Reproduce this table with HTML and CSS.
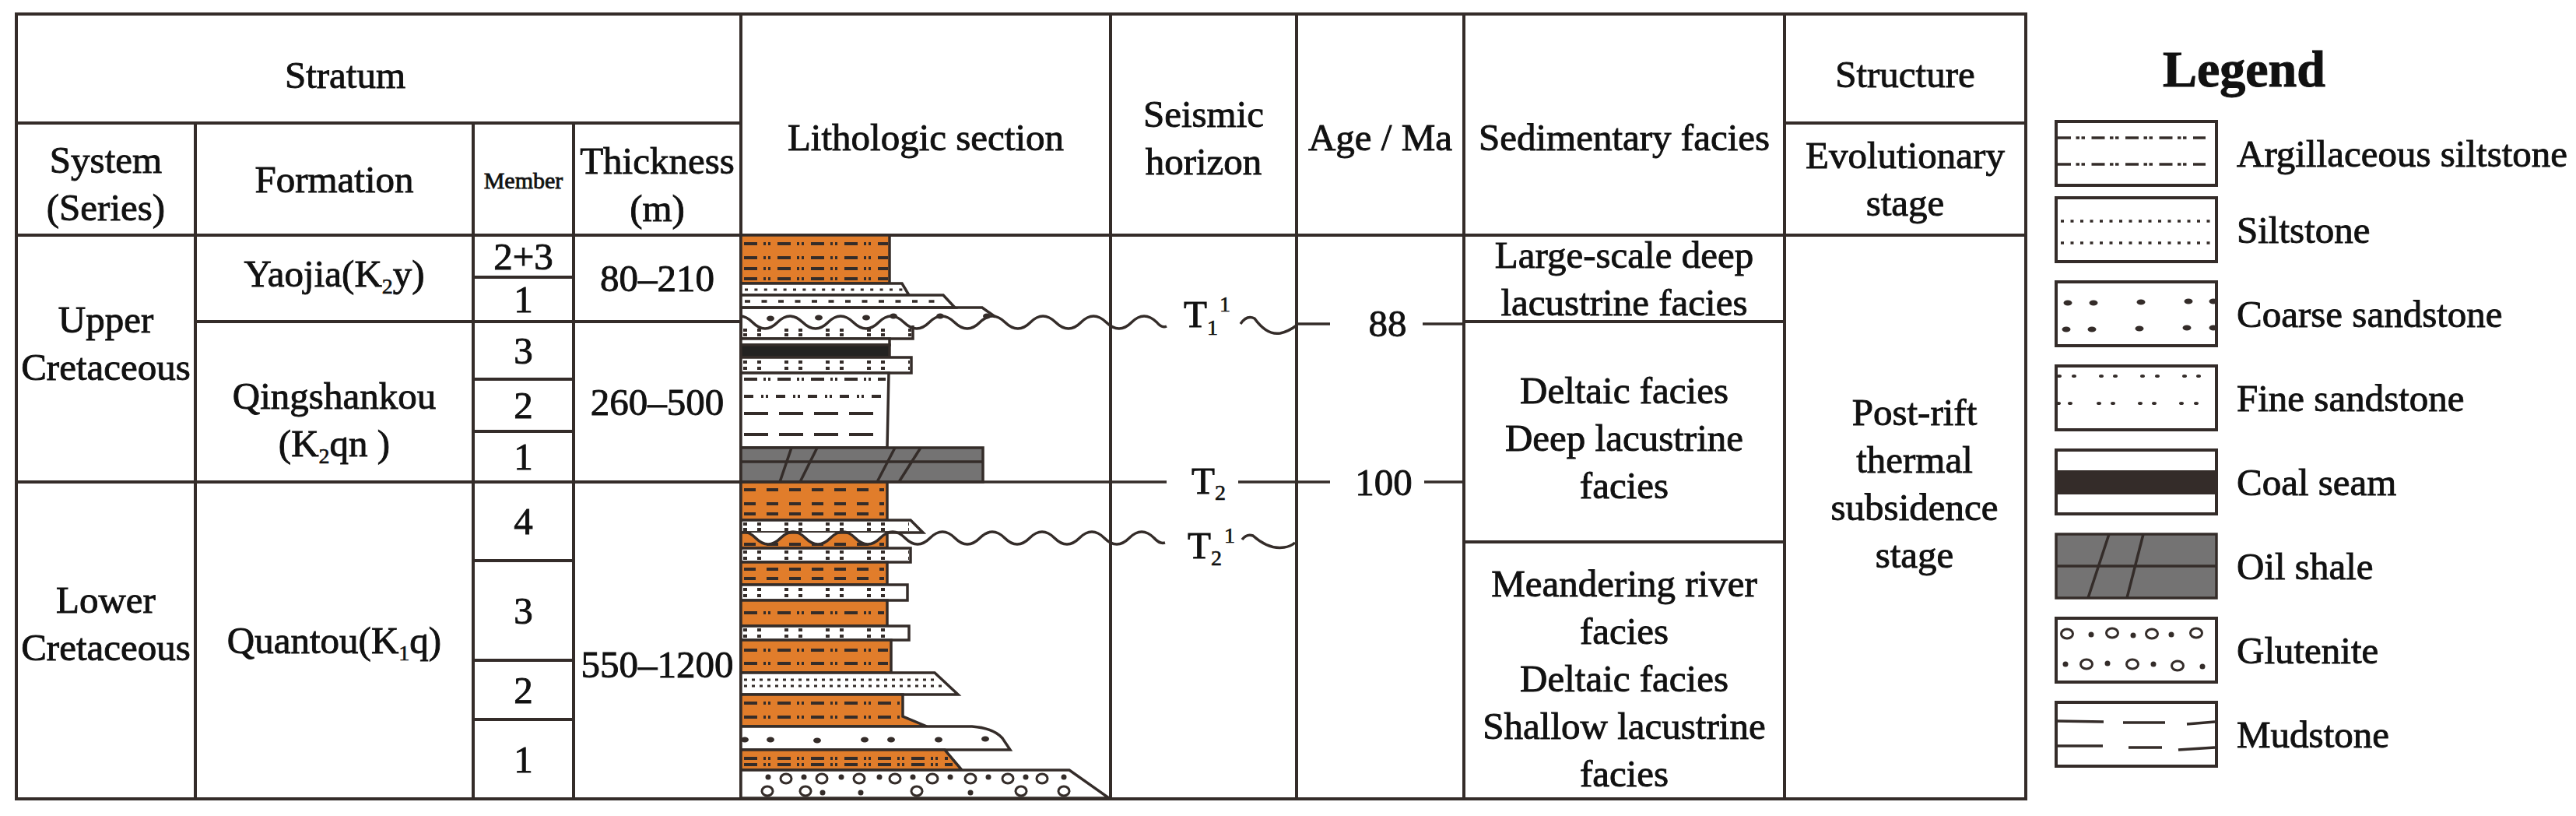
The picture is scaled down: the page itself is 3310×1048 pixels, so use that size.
FILE: index.html
```html
<!DOCTYPE html>
<html lang="en">
<head>
<meta charset="utf-8">
<title>Stratigraphic column</title>
<link rel="stylesheet" href="styles.css">
</head>
<body>
<div class="page">
  <div class="chart">
    <div class="cell h-stratum"><div class="txt">Stratum</div></div>
    <div class="cell h-litho"><div class="txt">Lithologic section</div></div>
    <div class="cell h-seis"><div class="txt">Seismic<br>horizon</div></div>
    <div class="cell h-age"><div class="txt">Age / Ma</div></div>
    <div class="cell h-facies"><div class="txt">Sedimentary facies</div></div>
    <div class="cell h-struct"><div class="txt">Structure</div></div>
    <div class="cell h-system"><div class="txt">System<br>(Series)</div></div>
    <div class="cell h-formation"><div class="txt">Formation</div></div>
    <div class="cell h-member"><div class="txt">Member</div></div>
    <div class="cell h-thick"><div class="txt">Thickness<br>(m)</div></div>
    <div class="cell h-evol"><div class="txt">Evolutionary<br>stage</div></div>

    <div class="cell b-upper"><div class="txt">Upper<br>Cretaceous</div></div>
    <div class="cell b-lower"><div class="txt">Lower<br>Cretaceous</div></div>
    <div class="cell b-yaojia"><div class="txt">Yaojia(K<span class="sub">2</span>y)</div></div>
    <div class="cell b-qing"><div class="txt">Qingshankou<br>(K<span class="sub">2</span>qn )</div></div>
    <div class="cell b-quan"><div class="txt">Quantou(K<span class="sub">1</span>q)</div></div>

    <div class="cell mem r3"><div class="txt">2+3</div></div>
    <div class="cell mem r4"><div class="txt">1</div></div>
    <div class="cell mem r5"><div class="txt">3</div></div>
    <div class="cell mem r6"><div class="txt">2</div></div>
    <div class="cell mem r7"><div class="txt">1</div></div>
    <div class="cell mem r8"><div class="txt">4</div></div>
    <div class="cell mem r9"><div class="txt">3</div></div>
    <div class="cell mem r10"><div class="txt">2</div></div>
    <div class="cell mem r11"><div class="txt">1</div></div>

    <div class="cell b-t1"><div class="txt">80–210</div></div>
    <div class="cell b-t2"><div class="txt">260–500</div></div>
    <div class="cell b-t3"><div class="txt">550–1200</div></div>

    <div class="cell b-litho"></div>
    <div class="cell b-seis"></div>
    <div class="cell b-age"></div>

    <div class="cell b-facies">
      <div class="fbox f1"><div class="txt">Large-scale deep<br>lacustrine facies</div></div>
      <div class="fbox f2"><div class="txt">Deltaic facies<br>Deep lacustrine<br>facies</div></div>
      <div class="fbox f3"><div class="txt">Meandering river<br>facies<br>Deltaic facies<br>Shallow lacustrine<br>facies</div></div>
    </div>

    <div class="cell b-struct"><div class="txt">Post-rift<br>thermal<br>subsidence<br>stage</div></div>

    <svg class="overlay" viewBox="950 300 933 728" width="933" height="728" xmlns="http://www.w3.org/2000/svg">
      <defs>
        <clipPath id="clipT21"><rect x="954" y="684" width="186" height="20"/></clipPath>
      </defs>

      <rect class="or" x="952" y="302" width="191" height="62"/>
      <line class="pl arg" x1="956" y1="313" x2="1141" y2="313"/>
      <line class="pl arg" x1="956" y1="331" x2="1141" y2="331"/>
      <line class="pl arg" x1="956" y1="345" x2="1141" y2="345"/>
      <line class="pl arg" x1="956" y1="358" x2="1141" y2="358"/>

      <polygon class="wh" points="952,364 1159,364 1168,379 952,379"/>
      <line class="pl silt" x1="957" y1="372" x2="1160" y2="372"/>

      <polygon class="wh" points="952,379 1212,379 1227,395 952,395"/>
      <line class="pl cdash" x1="957" y1="387" x2="1215" y2="387"/>

      <path class="ln" d="M952,395 L1262,395 L1279,407"/>
      <ellipse class="dot" cx="990" cy="409" rx="5" ry="3.5"/>
      <ellipse class="dot" cx="1052" cy="408" rx="5" ry="3.5"/>
      <ellipse class="dot" cx="1113" cy="408" rx="5" ry="3.5"/>
      <ellipse class="dot" cx="1148" cy="406" rx="5" ry="3.5"/>
      <ellipse class="dot" cx="1208" cy="406" rx="5" ry="3.5"/>
      <ellipse class="dot" cx="1268" cy="406" rx="5" ry="3.5"/>

      <path class="ln" d="M1173,418 L1173,435 L952,435"/>
      <line class="pl pair" x1="955" y1="424" x2="1171" y2="424"/>
      <line class="pl pair" x1="955" y1="430" x2="1171" y2="430"/>

      <rect class="wh" x="952" y="435" width="191" height="8"/>
      <rect class="coal" x="952" y="443" width="191" height="16"/>
      <rect class="wh" x="952" y="459" width="219" height="20"/>
      <line class="pl pair" x1="955" y1="465" x2="1169" y2="465"/>
      <line class="pl pair" x1="955" y1="473" x2="1169" y2="473"/>

      <polygon class="wh" points="952,479 1142,479 1140,575 952,575"/>
      <line class="pl arg" x1="956" y1="487" x2="1138" y2="487"/>
      <line class="pl arg2" x1="956" y1="509" x2="1138" y2="509"/>
      <line class="pl long" x1="956" y1="531" x2="1130" y2="531"/>
      <line class="pl long" x1="956" y1="558" x2="1130" y2="558"/>

      <rect class="shale" x="952" y="575" width="311" height="44"/>
      <line class="ln" x1="952" y1="593" x2="1263" y2="593"/>
      <line class="ln" x1="1017" y1="575" x2="1002" y2="619"/>
      <line class="ln" x1="1050" y1="575" x2="1028" y2="619"/>
      <line class="ln" x1="1150" y1="575" x2="1127" y2="619"/>
      <line class="ln" x1="1183" y1="575" x2="1155" y2="619"/>

      <rect class="or" x="952" y="619" width="188" height="49"/>
      <line class="pl dsh" x1="956" y1="629" x2="1136" y2="629"/>
      <line class="pl dsh" x1="956" y1="647" x2="1136" y2="647"/>
      <line class="pl dsh" x1="956" y1="660" x2="1136" y2="660"/>

      <polygon class="wh" points="952,668 1170,668 1186,684 952,684"/>
      <line class="pl pair" x1="955" y1="673" x2="1168" y2="673"/>
      <line class="pl pair" x1="955" y1="680" x2="1168" y2="680"/>

      <rect class="or" x="952" y="684" width="188" height="20"/>
      <line class="pl dsh" x1="956" y1="699" x2="1136" y2="699"/>
      <path class="fillw" clip-path="url(#clipT21)" d="M955,683 Q963,683 971,691 Q987,707 1003,691 T1035,691 T1067,691 T1099,691 T1131,691 T1163,691 L1163,660 L950,660 Z"/>

      <rect class="wh" x="952" y="704" width="218" height="18"/>
      <line class="pl pair" x1="955" y1="709" x2="1168" y2="709"/>
      <line class="pl pair" x1="955" y1="717" x2="1168" y2="717"/>

      <rect class="or" x="952" y="722" width="188" height="29"/>
      <line class="pl dsh" x1="956" y1="731" x2="1136" y2="731"/>
      <line class="pl dsh" x1="956" y1="743" x2="1136" y2="743"/>

      <rect class="wh" x="952" y="751" width="214" height="20"/>
      <line class="pl pair" x1="955" y1="757" x2="1164" y2="757"/>
      <line class="pl pair" x1="955" y1="765" x2="1164" y2="765"/>

      <rect class="or" x="952" y="771" width="188" height="33"/>
      <line class="pl arg" x1="956" y1="787" x2="1136" y2="787"/>

      <rect class="wh" x="952" y="804" width="216" height="18"/>
      <line class="pl pair" x1="955" y1="809" x2="1166" y2="809"/>
      <line class="pl pair" x1="955" y1="817" x2="1166" y2="817"/>

      <rect class="or" x="952" y="822" width="193" height="42"/>
      <line class="pl arg" x1="956" y1="835" x2="1141" y2="835"/>
      <line class="pl arg" x1="956" y1="852" x2="1141" y2="852"/>

      <polygon class="wh" points="952,864 1201,864 1231,892 952,892"/>
      <line class="pl dense" x1="956" y1="873" x2="1205" y2="873"/>
      <line class="pl dense" x1="956" y1="881" x2="1214" y2="881"/>

      <polygon class="or" points="952,892 1160,892 1160,920 1191,933 952,933"/>
      <line class="pl arg" x1="956" y1="903" x2="1156" y2="903"/>
      <line class="pl arg" x1="956" y1="921" x2="1156" y2="921"/>

      <path class="wh" d="M952,933 L1249,933 Q1276,935 1288,948 L1298,963 L952,963 Z"/>
      <ellipse class="dot" cx="957" cy="950" rx="5" ry="3.5"/>
      <ellipse class="dot" cx="990" cy="950" rx="5" ry="3.5"/>
      <ellipse class="dot" cx="1050" cy="951" rx="5" ry="3.5"/>
      <ellipse class="dot" cx="1111" cy="950" rx="5" ry="3.5"/>
      <ellipse class="dot" cx="1145" cy="950" rx="5" ry="3.5"/>
      <ellipse class="dot" cx="1206" cy="950" rx="5" ry="3.5"/>
      <ellipse class="dot" cx="1266" cy="949" rx="5" ry="3.5"/>

      <polygon class="or" points="952,963 1214,963 1236,989 952,989"/>
      <line class="pl arg" x1="956" y1="974" x2="1218" y2="974"/>
      <line class="pl arg" x1="956" y1="982" x2="1224" y2="982"/>

      <polygon class="wh" points="952,989 1374,989 1425,1025 952,1025"/>
      <ellipse class="ring" cx="1010" cy="1000" rx="7" ry="6"/>
      <ellipse class="ring" cx="1056" cy="1000" rx="7" ry="6"/>
      <ellipse class="ring" cx="1104" cy="1000" rx="7" ry="6"/>
      <ellipse class="ring" cx="1150" cy="1000" rx="7" ry="6"/>
      <ellipse class="ring" cx="1198" cy="1000" rx="7" ry="6"/>
      <ellipse class="ring" cx="1247" cy="1000" rx="7" ry="6"/>
      <ellipse class="ring" cx="1295" cy="1000" rx="7" ry="6"/>
      <ellipse class="ring" cx="1339" cy="1000" rx="7" ry="6"/>
      <circle class="dot" cx="987" cy="998" r="3.5"/>
      <circle class="dot" cx="1033" cy="998" r="3.5"/>
      <circle class="dot" cx="1081" cy="998" r="3.5"/>
      <circle class="dot" cx="1130" cy="998" r="3.5"/>
      <circle class="dot" cx="1173" cy="998" r="3.5"/>
      <circle class="dot" cx="1221" cy="998" r="3.5"/>
      <circle class="dot" cx="1270" cy="998" r="3.5"/>
      <circle class="dot" cx="1318" cy="998" r="3.5"/>
      <circle class="dot" cx="1367" cy="998" r="3.5"/>
      <ellipse class="ring" cx="986" cy="1016" rx="7" ry="6"/>
      <ellipse class="ring" cx="1035" cy="1016" rx="7" ry="6"/>
      <ellipse class="ring" cx="1178" cy="1016" rx="7" ry="6"/>
      <ellipse class="ring" cx="1312" cy="1016" rx="7" ry="6"/>
      <ellipse class="ring" cx="1367" cy="1016" rx="7" ry="6"/>
      <circle class="dot" cx="1057" cy="1018" r="3.5"/>
      <circle class="dot" cx="1106" cy="1018" r="3.5"/>
      <circle class="dot" cx="1247" cy="1018" r="3.5"/>

      <path class="ln" d="M951,406 Q959,406 967,414 Q983,430 999,414 T1031.5,414 T1064,414 T1096.5,414 T1129,414 T1161.5,414 T1194,414 T1226.5,414 T1259,414 T1291.5,414 T1324,414 T1356.5,414 T1389,414 T1421.5,414 T1454,414 T1486.5,414 Q1493,422 1499,419"/>
      <path class="ln" d="M1594,416 Q1602,404 1612,409 Q1628,431 1645,428 Q1655,426 1666,418"/>
      <text class="lbl" x="1521" y="420">T<tspan class="ss" dy="10">1</tspan><tspan class="ss" dx="3" dy="-30">1</tspan></text>
      <line class="ln" x1="1664" y1="416" x2="1709" y2="416"/>
      <text class="lbl mid" x="1783" y="432">88</text>
      <line class="ln" x1="1828" y1="416" x2="1882" y2="416"/>

      <line class="ln" x1="952" y1="619" x2="1499" y2="619"/>
      <text class="lbl" x="1531" y="634">T<tspan class="ss" dy="8">2</tspan></text>
      <line class="ln" x1="1591" y1="619" x2="1709" y2="619"/>
      <text class="lbl mid" x="1778" y="636">100</text>
      <line class="ln" x1="1830" y1="619" x2="1882" y2="619"/>

      <path class="ln" d="M955,683 Q963,683 971,691 Q987,707 1003,691 T1035,691 T1067,691 T1099,691 T1131,691 T1163,691 T1195,691 T1227,691 T1259,691 T1291,691 T1323,691 T1355,691 T1387,691 T1419,691 T1451,691 T1483,691 Q1490,699 1497,697"/>
      <path class="ln" d="M1596,693 Q1602,685 1610,688 Q1630,706 1650,703 Q1658,702 1664,697"/>
      <text class="lbl" x="1526" y="717">T<tspan class="ss" dy="9">2</tspan><tspan class="ss" dx="3" dy="-29">1</tspan></text>
    </svg>
  </div>

  <aside class="legend">
    <div class="legend-title">Legend</div>
    <ul class="legend-list">
      <li class="legend-item">
        <svg class="swatch" viewBox="0 0 210 86" width="210" height="86" xmlns="http://www.w3.org/2000/svg">
          <rect class="sw" x="2" y="2" width="206" height="82"/>
          <line class="pl sw-arg" x1="4" y1="23" x2="194" y2="23"/>
          <line class="pl sw-arg" x1="4" y1="57" x2="194" y2="57"/>
        </svg>
        <span class="legend-label">Argillaceous siltstone</span>
      </li>
      <li class="legend-item tight">
        <svg class="swatch" viewBox="0 0 210 86" width="210" height="86" xmlns="http://www.w3.org/2000/svg">
          <rect class="sw" x="2" y="2" width="206" height="82"/>
          <line class="pl sw-silt" x1="8" y1="32" x2="201" y2="32"/>
          <line class="pl sw-silt" x1="8" y1="60" x2="201" y2="60"/>
        </svg>
        <span class="legend-label">Siltstone</span>
      </li>
      <li class="legend-item">
        <svg class="swatch" viewBox="0 0 210 86" width="210" height="86" xmlns="http://www.w3.org/2000/svg">
          <rect class="sw" x="2" y="2" width="206" height="82"/>
          <ellipse class="dot" cx="17" cy="29" rx="5.5" ry="3.5"/>
          <ellipse class="dot" cx="50" cy="29" rx="5.5" ry="3.5"/>
          <ellipse class="dot" cx="111" cy="28" rx="5.5" ry="3.5"/>
          <ellipse class="dot" cx="172" cy="27" rx="5.5" ry="3.5"/>
          <ellipse class="dot" cx="204" cy="27" rx="5.5" ry="3.5"/>
          <ellipse class="dot" cx="15" cy="63" rx="5.5" ry="3.5"/>
          <ellipse class="dot" cx="48" cy="63" rx="5.5" ry="3.5"/>
          <ellipse class="dot" cx="109" cy="62" rx="5.5" ry="3.5"/>
          <ellipse class="dot" cx="170" cy="61" rx="5.5" ry="3.5"/>
          <ellipse class="dot" cx="204" cy="61" rx="5.5" ry="3.5"/>
        </svg>
        <span class="legend-label">Coarse sandstone</span>
      </li>
      <li class="legend-item">
        <svg class="swatch" viewBox="0 0 210 86" width="210" height="86" xmlns="http://www.w3.org/2000/svg">
          <rect class="sw" x="2" y="2" width="206" height="82"/>
          <ellipse class="dot" cx="6" cy="15" rx="3" ry="2"/>
          <ellipse class="dot" cx="25" cy="15" rx="3" ry="2"/>
          <ellipse class="dot" cx="60" cy="15" rx="3" ry="2"/>
          <ellipse class="dot" cx="78" cy="15" rx="3" ry="2"/>
          <ellipse class="dot" cx="113" cy="15" rx="3" ry="2"/>
          <ellipse class="dot" cx="132" cy="15" rx="3" ry="2"/>
          <ellipse class="dot" cx="167" cy="15" rx="3" ry="2"/>
          <ellipse class="dot" cx="185" cy="15" rx="3" ry="2"/>
          <ellipse class="dot" cx="5" cy="50" rx="3" ry="2"/>
          <ellipse class="dot" cx="20" cy="50" rx="3" ry="2"/>
          <ellipse class="dot" cx="57" cy="50" rx="3" ry="2"/>
          <ellipse class="dot" cx="75" cy="50" rx="3" ry="2"/>
          <ellipse class="dot" cx="110" cy="50" rx="3" ry="2"/>
          <ellipse class="dot" cx="128" cy="50" rx="3" ry="2"/>
          <ellipse class="dot" cx="163" cy="50" rx="3" ry="2"/>
          <ellipse class="dot" cx="182" cy="50" rx="3" ry="2"/>
        </svg>
        <span class="legend-label">Fine sandstone</span>
      </li>
      <li class="legend-item">
        <svg class="swatch" viewBox="0 0 210 86" width="210" height="86" xmlns="http://www.w3.org/2000/svg">
          <rect class="sw" x="2" y="2" width="206" height="82"/>
          <rect class="band" x="2" y="28" width="206" height="31"/>
        </svg>
        <span class="legend-label">Coal seam</span>
      </li>
      <li class="legend-item">
        <svg class="swatch" viewBox="0 0 210 86" width="210" height="86" xmlns="http://www.w3.org/2000/svg">
          <rect class="shale" x="2" y="2" width="206" height="82"/>
          <line class="ln" x1="2" y1="43" x2="208" y2="43"/>
          <line class="ln" x1="70" y1="2" x2="43" y2="84"/>
          <line class="ln" x1="114" y1="2" x2="93" y2="84"/>
        </svg>
        <span class="legend-label">Oil shale</span>
      </li>
      <li class="legend-item">
        <svg class="swatch" viewBox="0 0 210 86" width="210" height="86" xmlns="http://www.w3.org/2000/svg">
          <rect class="sw" x="2" y="2" width="206" height="82"/>
          <ellipse class="ring" cx="16" cy="22" rx="7.5" ry="6"/>
          <ellipse class="ring" cx="74" cy="21" rx="7.5" ry="6"/>
          <ellipse class="ring" cx="125" cy="22" rx="7.5" ry="6"/>
          <ellipse class="ring" cx="182" cy="21" rx="7.5" ry="6"/>
          <circle class="dot" cx="47" cy="23" r="3.5"/>
          <circle class="dot" cx="101" cy="24" r="3.5"/>
          <circle class="dot" cx="150" cy="23" r="3.5"/>
          <circle class="dot" cx="14" cy="61" r="3.5"/>
          <circle class="dot" cx="68" cy="60" r="3.5"/>
          <circle class="dot" cx="127" cy="61" r="3.5"/>
          <circle class="dot" cx="190" cy="64" r="3.5"/>
          <ellipse class="ring" cx="41" cy="61" rx="7.5" ry="6"/>
          <ellipse class="ring" cx="100" cy="61" rx="7.5" ry="6"/>
          <ellipse class="ring" cx="158" cy="63" rx="7.5" ry="6"/>
        </svg>
        <span class="legend-label">Glutenite</span>
      </li>
      <li class="legend-item">
        <svg class="swatch" viewBox="0 0 210 86" width="210" height="86" xmlns="http://www.w3.org/2000/svg">
          <rect class="sw" x="2" y="2" width="206" height="82"/>
          <line class="ln" x1="2" y1="26" x2="63" y2="27"/>
          <line class="ln" x1="88" y1="28" x2="142" y2="28"/>
          <line class="ln" x1="170" y1="30" x2="206" y2="27"/>
          <line class="ln" x1="3" y1="58" x2="62" y2="58"/>
          <line class="ln" x1="95" y1="60" x2="138" y2="60"/>
          <line class="ln" x1="159" y1="63" x2="206" y2="60"/>
        </svg>
        <span class="legend-label">Mudstone</span>
      </li>
    </ul>
  </aside>
</div>
</body>
</html>
```

FILE: styles.css
```css
* { box-sizing: border-box; }

html, body {
  margin: 0;
  padding: 0;
  background: #ffffff;
}

body {
  font-family: "Liberation Serif", "Times New Roman", serif;
  color: #111111;
  -webkit-text-stroke: 0.9px #111111;
}

.page {
  display: flex;
  align-items: flex-start;
  gap: 35px;
  width: 3310px;
  height: 1048px;
  padding: 16px 0 0 19px;
  overflow: hidden;
}

/* ---------- main chart grid ---------- */
.chart {
  position: relative;
  display: grid;
  grid-template-columns: 226px 353px 125px 211px 471px 235px 211px 408px 306px;
  grid-template-rows: 136px 140px 50px 53px 70px 63px 61px 97px 124px 72px 98px;
  gap: 4px;
  padding: 4px;
  background: #342c29;
  font-size: 49px;
  line-height: 61px;
  flex: none;
}

.cell {
  background: #ffffff;
  display: flex;
  align-items: center;
  justify-content: center;
  text-align: center;
  min-width: 0;
}

.txt { white-space: nowrap; }

.sub {
  font-size: 28px;
  line-height: 0;
  vertical-align: -9px;
  -webkit-text-stroke: 0.6px #111111;
}

/* header cells */
.h-stratum { grid-column: 1 / 5; grid-row: 1; padding: 16px 86px 0 0; }
.h-litho { grid-column: 5; grid-row: 1 / 3; padding-top: 32px; }
.h-seis { grid-column: 6; grid-row: 1 / 3; padding-top: 34px; }
.h-age { grid-column: 7; grid-row: 1 / 3; padding-top: 32px; }
.h-facies { grid-column: 8; grid-row: 1 / 3; padding-top: 32px; }
.h-struct { grid-column: 9; grid-row: 1; padding-top: 14px; }
.h-system { grid-column: 1; grid-row: 2; padding-top: 12px; }
.h-formation { grid-column: 2; grid-row: 2; }
.h-member { grid-column: 3; grid-row: 2; font-size: 30px; -webkit-text-stroke: 0.8px #111111; padding-top: 2px; }
.h-thick { grid-column: 4; grid-row: 2; padding-top: 14px; }
.h-evol { grid-column: 9; grid-row: 2; }

/* body cells */
.b-upper { grid-column: 1; grid-row: 3 / 8; padding-bottom: 40px; }
.b-lower { grid-column: 1; grid-row: 8 / 12; padding-bottom: 44px; }
.b-yaojia { grid-column: 2; grid-row: 3 / 5; padding-bottom: 12px; }
.b-qing { grid-column: 2; grid-row: 5 / 8; padding-top: 46px; }
.b-quan { grid-column: 2; grid-row: 8 / 12; }

.mem { grid-column: 3; }
.r3 { grid-row: 3; }
.r4 { grid-row: 4; }
.r5 { grid-row: 5; }
.r6 { grid-row: 6; }
.r7 { grid-row: 7; }
.r8 { grid-row: 8; }
.r9 { grid-row: 9; }
.r10 { grid-row: 10; }
.r11 { grid-row: 11; }

.b-t1 { grid-column: 4; grid-row: 3 / 5; }
.b-t2 { grid-column: 4; grid-row: 5 / 8; }
.b-t3 { grid-column: 4; grid-row: 8 / 12; padding-top: 62px; }

.b-litho { grid-column: 5; grid-row: 3 / 12; }
.b-seis { grid-column: 6; grid-row: 3 / 12; }
.b-age { grid-column: 7; grid-row: 3 / 12; }

.b-facies {
  grid-column: 8;
  grid-row: 3 / 12;
  flex-direction: column;
  align-items: stretch;
  justify-content: flex-start;
  gap: 4px;
  background: #342c29;
}
.fbox {
  background: #ffffff;
  display: flex;
  align-items: center;
  justify-content: center;
  text-align: center;
}
.f1 { height: 107px; }
.f2 { height: 279px; padding-top: 16px; }
.f3 { flex: 1; padding-top: 20px; }

.b-struct { grid-column: 9; grid-row: 3 / 12; padding: 0 0 86px 24px; }

/* ---------- lithology / horizon overlay ---------- */
.overlay {
  position: absolute;
  left: 931px;
  top: 284px;
  width: 933px;
  height: 728px;
  overflow: visible;
  pointer-events: none;
}

.ln { stroke: #342c29; stroke-width: 3.5; fill: none; }
.pl { stroke: #342c29; fill: none; }
.or { fill: #e17d2b; stroke: #342c29; stroke-width: 3.5; }
.wh { fill: #ffffff; stroke: #342c29; stroke-width: 3.5; }
.fillw { fill: #ffffff; stroke: none; }
.coal { fill: #232221; stroke: #342c29; stroke-width: 3.5; }
.shale { fill: #747373; stroke: #342c29; stroke-width: 3.5; }
.dot { fill: #342c29; }
.ring { fill: none; stroke: #342c29; stroke-width: 3; }

.arg { stroke-width: 4; stroke-dasharray: 17 8 3 3 3 9; }
.arg2 { stroke-width: 4; stroke-dasharray: 12 10 3 3 3 10; }
.dsh { stroke-width: 4; stroke-dasharray: 15 14; }
.silt { stroke-width: 3; stroke-dasharray: 4 8.4; }
.cdash { stroke-width: 3.5; stroke-dasharray: 7 14.5; }
.pair { stroke-width: 4; stroke-dasharray: 5 13 5 30; }
.dense { stroke-width: 3; stroke-dasharray: 4 6; }
.long { stroke-width: 4; stroke-dasharray: 31 14; }

.lbl {
  font-family: "Liberation Serif", "Times New Roman", serif;
  font-size: 49px;
  fill: #111111;
  stroke: #111111;
  stroke-width: 0.9px;
}
.lbl.mid { text-anchor: middle; }
.ss { font-size: 28px; stroke-width: 0.6px; }

/* ---------- legend ---------- */
.legend {
  display: flex;
  flex-direction: column;
  flex: none;
}

.legend-title {
  font-weight: bold;
  font-size: 66px;
  line-height: 80px;
  margin: 33px 0 25px 139px;
  -webkit-text-stroke: 1px #111111;
}

.legend-list {
  list-style: none;
  margin: 0;
  padding: 0;
  display: flex;
  flex-direction: column;
  gap: 22px;
}

.legend-item {
  display: flex;
  align-items: center;
  height: 86px;
}
.legend-item.tight { margin-top: -10px; }

.swatch { flex: none; display: block; }
.sw { fill: #ffffff; stroke: #342c29; stroke-width: 4; }
.band { fill: #342c29; }
.sw-arg { stroke-width: 3.5; stroke-dasharray: 17 6.5 4.5 2.5 4.5 8.5; }
.sw-silt { stroke-width: 3.5; stroke-dasharray: 4 8.5; }

.legend-label {
  margin-left: 24px;
  font-size: 49px;
  line-height: 61px;
  white-space: nowrap;
}
```
